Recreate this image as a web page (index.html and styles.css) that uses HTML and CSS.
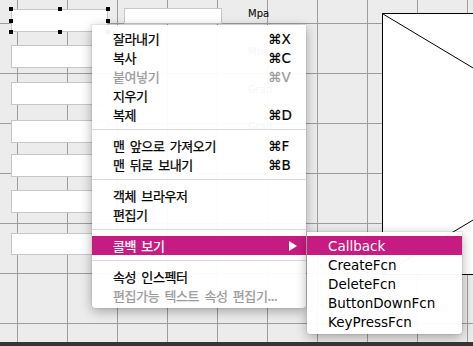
FILE: index.html
```html
<!DOCTYPE html>
<html lang="ko">
<head>
    <meta charset="UTF-8">
    <meta name="viewport" content="width=device-width, initial-scale=1.0">
    <title>GUIDE 레이아웃 편집기</title>
    <link rel="stylesheet" href="styles.css">
</head>
<body>
    <div class="canvas">
        <div class="field f1"></div>
        <div class="field f2"></div>
        <div class="field f3"></div>
        <div class="field f4"></div>
        <div class="field f5"></div>
        <div class="field f6"></div>
        <div class="field f7"></div>
        <div class="field top-wide"></div>

        <span class="unit u1">Mpa</span>
        <span class="unit u2">Mpa</span>
        <span class="unit u3">Grad</span>
        <span class="unit u4">Grad</span>

        <!-- selection handles around the first edit box -->
        <span class="handle h-tl"></span>
        <span class="handle h-tm"></span>
        <span class="handle h-tr"></span>
        <span class="handle h-ml"></span>
        <span class="handle h-mr"></span>
        <span class="handle h-bl"></span>
        <span class="handle h-bm"></span>
        <span class="handle h-br"></span>

        <div class="axes">
            <svg viewBox="0 0 434 260" preserveAspectRatio="none">
                <line x1="0" y1="0" x2="434" y2="260" stroke="#000" stroke-width="1"/>
                <line x1="0" y1="260" x2="434" y2="0" stroke="#000" stroke-width="1"/>
            </svg>
        </div>

        <div class="menu main-menu">
            <div class="item"><span class="label">잘라내기</span><span class="key">⌘X</span></div>
            <div class="item"><span class="label">복사</span><span class="key">⌘C</span></div>
            <div class="item disabled"><span class="label">붙여넣기</span><span class="key">⌘V</span></div>
            <div class="item"><span class="label">지우기</span><span class="key"></span></div>
            <div class="item"><span class="label">복제</span><span class="key">⌘D</span></div>
            <div class="sep"></div>
            <div class="item"><span class="label">맨 앞으로 가져오기</span><span class="key">⌘F</span></div>
            <div class="item"><span class="label">맨 뒤로 보내기</span><span class="key">⌘B</span></div>
            <div class="sep"></div>
            <div class="item"><span class="label">객체 브라우저</span><span class="key"></span></div>
            <div class="item"><span class="label">편집기</span><span class="key"></span></div>
            <div class="sep"></div>
            <div class="item active">
                <span class="label">콜백 보기</span>
                <span class="key arrow">
                    <svg width="8" height="10" viewBox="0 0 8 10"><path d="M0 0 L8 5 L0 10 Z" fill="#fff"/></svg>
                </span>
            </div>
            <div class="sep"></div>
            <div class="item"><span class="label">속성 인스펙터</span><span class="key"></span></div>
            <div class="item disabled"><span class="label">편집가능 텍스트 속성 편집기...</span><span class="key"></span></div>
        </div>

        <div class="menu sub-menu">
            <div class="item active"><span class="label">Callback</span></div>
            <div class="item"><span class="label">CreateFcn</span></div>
            <div class="item"><span class="label">DeleteFcn</span></div>
            <div class="item"><span class="label">ButtonDownFcn</span></div>
            <div class="item"><span class="label">KeyPressFcn</span></div>
        </div>
    </div>
    <div class="dock"></div>
</body>
</html>
```

FILE: styles.css
```css
body {
    margin: 0;
    background-color: #353535;
    font-family: "DejaVu Sans", "Noto Sans CJK KR", sans-serif;
}
.canvas {
    position: relative;
    height: 342px;
    overflow: hidden;
    background-color: #ececec;
    background-image:
        linear-gradient(to right, #9c9c9c 1px, transparent 1px),
        linear-gradient(to bottom, #9c9c9c 1px, transparent 1px);
    background-size: 50px 50px;
    background-position: 17px 23px;
}
.dock {
    height: 4px;
    background-color: #353535;
}

/* components placed on the layout canvas */
.field {
    position: absolute;
    left: 11px;
    width: 97px;
    height: 23px;
    box-sizing: border-box;
    background-color: #fff;
    border: 1px solid #c6c6c6;
}
.f1 { top: 9px; }
.f2 { top: 45px; }
.f3 { top: 82px; }
.f4 { top: 120px; }
.f5 { top: 154px; }
.f6 { top: 190px; }
.f7 { top: 233px; height: 22px; }
.top-wide {
    left: 124px;
    top: 8px;
    width: 98px;
    height: 16px;
}
.unit {
    position: absolute;
    left: 248px;
    font-size: 10px;
    line-height: 12px;
    color: #111;
    -webkit-text-stroke: 0.15px #111;
}
.u1 { top: 8px; }
.u2 { top: 46px; }
.u3 { top: 84px; }
.u4 { top: 121px; }

.handle {
    position: absolute;
    width: 4px;
    height: 4px;
    background-color: #000;
}
.h-tl { left: 9px; top: 7px; }
.h-tm { left: 58px; top: 7px; }
.h-tr { left: 106px; top: 7px; }
.h-ml { left: 9px; top: 19px; }
.h-mr { left: 106px; top: 19px; }
.h-bl { left: 9px; top: 30px; }
.h-bm { left: 58px; top: 30px; }
.h-br { left: 106px; top: 30px; }

.axes {
    position: absolute;
    left: 382px;
    top: 13px;
    width: 434px;
    height: 260px;
    background-color: #fff;
    border: 1px solid #000;
}
.axes svg {
    display: block;
    width: 100%;
    height: 100%;
}

/* context menus */
.menu {
    position: absolute;
    display: flex;
    flex-direction: column;
    padding: 4px 0 3px;
    background-color: rgba(255, 255, 255, 0.96);
    border-radius: 0 0 4px 4px;
    box-shadow: 0 3px 12px rgba(0, 0, 0, 0.32), 0 0 0 1px rgba(0, 0, 0, 0.05);
}
.main-menu {
    left: 92px;
    top: 25px;
    width: 214px;
}
.sub-menu {
    left: 307px;
    top: 232px;
    width: 155px;
}
.item {
    display: flex;
    align-items: center;
    height: 19px;
    padding: 0 14px 0 21px;
    color: #000;
    white-space: nowrap;
}
.main-menu .label {
    flex: 1;
    font-family: "Noto Sans CJK KR", sans-serif;
    font-size: 13px;
    letter-spacing: -0.4px;
    word-spacing: 2px;
    -webkit-text-stroke: 0.25px currentColor;
}
.sub-menu .label {
    font-size: 13.5px;
}
.key {
    width: 24px;
    font-size: 13.5px;
    -webkit-text-stroke: 0.2px currentColor;
}
.arrow {
    display: flex;
    justify-content: flex-end;
    margin-right: -5px;
}
.item.disabled {
    color: #999;
}
.item.active {
    background-color: #c61b81;
    color: #fff;
}
.sep {
    height: 1px;
    margin: 5px 0 6px;
    background-color: #dadada;
}
```
